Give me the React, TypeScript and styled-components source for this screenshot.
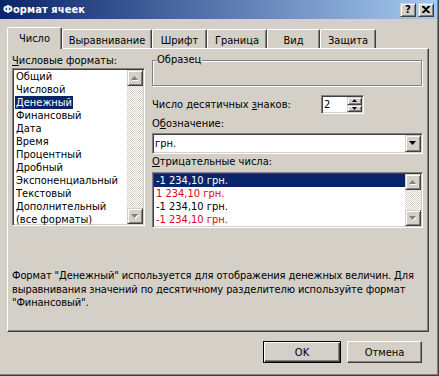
import React from "react";
import styled, { createGlobalStyle } from "styled-components";

const FACE = "#d4d0c8";
const SHADOW = "#808080";
const DARK = "#404040";
const NAVY = "#0a246a";
const RED = "#e0001a";

const GlobalStyle = createGlobalStyle`
  html, body {
    margin: 0;
    padding: 0;
    background: ${FACE};
  }
  body {
    font-family: "DejaVu Sans Condensed", "DejaVu Sans", sans-serif;
    font-size: 11px;
    color: #000;
  }
  * {
    box-sizing: border-box;
  }
`;

const Window = styled.div`
  width: 439px;
  height: 376px;
  background: ${FACE};
  border-right: 1px solid ${DARK};
  border-bottom: 1px solid ${DARK};
  box-shadow: inset -1px -1px ${SHADOW};
  display: flex;
  flex-direction: column;
  overflow: hidden;
`;

const TitleBar = styled.div`
  height: 19px;
  margin-right: 1px;
  padding: 0 3px 0 3px;
  background: linear-gradient(to right, ${NAVY}, #a6caf0);
  display: flex;
  align-items: center;
`;

const Title = styled.div`
  flex: 1;
  color: #fff;
  font-weight: bold;
  font-size: 11px;
  letter-spacing: 0.1px;
`;

const CaptionButton = styled.div`
  width: 16px;
  height: 14px;
  margin-left: 2px;
  background: ${FACE};
  border: 1px solid;
  border-color: ${FACE} ${DARK} ${DARK} ${FACE};
  box-shadow: inset 1px 1px #fff, inset -1px -1px ${SHADOW};
  display: flex;
  align-items: center;
  justify-content: center;
  font-family: "DejaVu Sans", sans-serif;
  font-weight: bold;
  font-size: 10px;
  line-height: 1;
`;

const Body = styled.div`
  flex: 1;
  padding: 0 9px 0 7px;
  display: flex;
  flex-direction: column;
`;

const TabStrip = styled.div`
  margin-top: 8px;
  height: 21px;
  display: flex;
  align-items: flex-end;
`;

const Tab = styled.div<{ $active?: boolean; $w: number }>`
  width: ${(p) => p.$w}px;
  height: ${(p) => (p.$active ? 22 : 19)}px;
  margin-bottom: ${(p) => (p.$active ? -1 : 0)}px;
  padding: ${(p) => (p.$active ? "0 0 1px" : "2px 0 0")};
  background: ${FACE};
  border-top: 1px solid #fff;
  border-left: 1px solid #fff;
  border-right: 1px solid ${DARK};
  border-top-left-radius: 2px;
  border-top-right-radius: 2px;
  box-shadow: inset -1px 0 ${SHADOW};
  display: flex;
  align-items: center;
  justify-content: center;
  position: relative;
  z-index: ${(p) => (p.$active ? 2 : 0)};
  white-space: nowrap;
`;

const Panel = styled.div`
  height: 284px;
  padding: 5px 4px 0 4px;
  border-top: 1px solid #fff;
  border-left: 1px solid #fff;
  border-right: 1px solid ${DARK};
  border-bottom: 1px solid ${DARK};
  box-shadow: inset -1px -1px ${SHADOW};
  display: flex;
  flex-direction: column;
`;

const Columns = styled.div`
  display: grid;
  grid-template-columns: 133px 271px;
  column-gap: 7px;
  align-items: start;
`;

const Column = styled.div`
  display: flex;
  flex-direction: column;
`;

const Label = styled.div<{ $mt?: number }>`
  height: 14px;
  line-height: 14px;
  margin-top: ${(p) => p.$mt ?? 0}px;
  white-space: nowrap;
`;

const Sunken = styled.div`
  background: #fff;
  border: 1px solid;
  border-color: ${SHADOW} #fff #fff ${SHADOW};
  box-shadow: inset 1px 1px ${DARK}, inset -1px -1px ${FACE};
  padding: 1px;
`;

const ListBox = styled(Sunken)<{ $h: number; $mt?: number }>`
  height: ${(p) => p.$h}px;
  margin-top: ${(p) => p.$mt ?? 0}px;
  display: flex;
`;

const Items = styled.div`
  flex: 1;
  display: flex;
  flex-direction: column;
  min-width: 0;
`;

const FormatItem = styled.div`
  height: 13px;
  line-height: 13px;
  padding-left: 1px;
  white-space: nowrap;
`;

const Highlight = styled.span<{ $on?: boolean }>`
  display: inline-block;
  padding: 0 1px;
  background: ${(p) => (p.$on ? NAVY : "transparent")};
  color: ${(p) => (p.$on ? "#fff" : "inherit")};
`;

const NegItem = styled.div<{ $selected?: boolean; $red?: boolean }>`
  height: 13px;
  line-height: 13px;
  padding-left: 2px;
  white-space: nowrap;
  background: ${(p) => (p.$selected ? NAVY : "transparent")};
  color: ${(p) => (p.$selected ? "#fff" : p.$red ? RED : "#000")};
`;

const ScrollBar = styled.div`
  width: 16px;
  flex: none;
  display: flex;
  flex-direction: column;
  justify-content: space-between;
  background-color: #e8e6e2;
  background-image: repeating-conic-gradient(${FACE} 0 25%, #fff 0 50%);
  background-size: 2px 2px;
`;

const RaisedButton = styled.div<{ $w: number; $h: number }>`
  width: ${(p) => p.$w}px;
  height: ${(p) => p.$h}px;
  flex: none;
  background: ${FACE};
  border: 1px solid;
  border-color: ${FACE} ${DARK} ${DARK} ${FACE};
  box-shadow: inset 1px 1px #fff, inset -1px -1px ${SHADOW};
  display: flex;
  align-items: center;
  justify-content: center;
`;

const GroupBox = styled.div`
  position: relative;
  margin-top: 6px;
  height: 26px;
  width: 270px;
  border: 1px solid ${SHADOW};
  box-shadow: inset 1px 1px #fff, 1px 1px #fff;
`;

const Legend = styled.span`
  position: absolute;
  top: -8px;
  left: 3px;
  padding: 0 1px;
  line-height: 14px;
  background: ${FACE};
`;

const SpinRow = styled.div`
  margin-top: 9px;
  height: 19px;
  display: flex;
  align-items: center;
`;

const SpinLabel = styled.div`
  width: 169px;
  white-space: nowrap;
`;

const SpinBox = styled(Sunken)`
  width: 43px;
  height: 19px;
  padding: 1px 1px 1px 2px;
  display: flex;
  align-items: center;
  justify-content: space-between;
`;

const SpinButtons = styled.div`
  display: flex;
  flex-direction: column;
  align-self: stretch;
`;

const Combo = styled(Sunken)`
  margin-top: 2px;
  height: 21px;
  display: flex;
  align-items: center;
  padding: 1px 1px 1px 2px;
`;

const ComboText = styled.div`
  flex: 1;
`;

const Description = styled.div`
  margin-top: 41px;
  line-height: 13.5px;
  white-space: nowrap;
  letter-spacing: -0.1px;
`;

const ButtonRow = styled.div`
  margin-top: 9px;
  padding-right: 7px;
  display: flex;
  justify-content: flex-end;
  gap: 6px;
`;

const DialogButton = styled.div<{ $default?: boolean }>`
  width: ${(p) => (p.$default ? 78 : 75)}px;
  height: 22px;
  background: ${FACE};
  border: 1px solid;
  border-color: ${(p) => (p.$default ? "#000" : `#fff ${DARK} ${DARK} #fff`)};
  box-shadow: ${(p) =>
    p.$default
      ? `inset 1px 1px #fff, inset -1px -1px ${DARK}, inset -2px -2px ${SHADOW}`
      : `inset -1px -1px ${SHADOW}`};
  display: flex;
  align-items: center;
  justify-content: center;
`;

type ArrowProps = { dir: "up" | "down"; disabled?: boolean; size?: number };

const Arrow = ({ dir, disabled, size = 7 }: ArrowProps) => {
  const half = Math.floor(size / 2);
  const h = half + 1;
  const pts =
    dir === "up"
      ? `0,${h} ${size},${h} ${size / 2},0`
      : `0,0 ${size},0 ${size / 2},${h}`;
  return (
    <svg width={size + 1} height={h + 1} viewBox={`0 0 ${size + 1} ${h + 1}`}>
      {disabled && <polygon points={pts} fill="#fff" transform="translate(1,1)" />}
      <polygon points={pts} fill={disabled ? SHADOW : "#000"} />
    </svg>
  );
};

const CloseGlyph = () => (
  <svg width="8" height="7" viewBox="0 0 8 7">
    <path d="M0 0h2l2 2 2-2h2v1L5 3.5 8 6v1H6L4 5 2 7H0V6l3-2.5L0 1z" fill="#000" />
  </svg>
);

const formats = [
  "Общий",
  "Числовой",
  "Денежный",
  "Финансовый",
  "Дата",
  "Время",
  "Процентный",
  "Дробный",
  "Экспоненциальный",
  "Текстовый",
  "Дополнительный",
  "(все форматы)",
];

const negatives = [
  { text: "-1 234,10 грн.", red: false },
  { text: "1 234,10 грн.", red: true },
  { text: "-1 234,10 грн.", red: false },
  { text: "-1 234,10 грн.", red: true },
];

const tabs: [string, number][] = [
  ["Число", 55],
  ["Выравнивание", 90],
  ["Шрифт", 55],
  ["Граница", 60],
  ["Вид", 53],
  ["Защита", 56],
];

const App = () => {
  return (
    <>
      <GlobalStyle />
      <Window>
        <TitleBar>
          <Title>Формат ячеек</Title>
          <CaptionButton>?</CaptionButton>
          <CaptionButton>
            <CloseGlyph />
          </CaptionButton>
        </TitleBar>

        <Body>
          <TabStrip>
            {tabs.map(([name, w], i) => (
              <Tab key={name} $w={w} $active={i === 0}>
                {name}
              </Tab>
            ))}
          </TabStrip>

          <Panel>
            <Columns>
              <Column>
                <Label>
                  <u>Ч</u>исловые форматы:
                </Label>
                <ListBox $h={158}>
                  <Items>
                    {formats.map((f) => (
                      <FormatItem key={f}>
                        <Highlight $on={f === "Денежный"}>{f}</Highlight>
                      </FormatItem>
                    ))}
                  </Items>
                  <ScrollBar>
                    <RaisedButton $w={16} $h={16}>
                      <Arrow dir="up" disabled />
                    </RaisedButton>
                    <RaisedButton $w={16} $h={16}>
                      <Arrow dir="down" disabled />
                    </RaisedButton>
                  </ScrollBar>
                </ListBox>
              </Column>

              <Column>
                <GroupBox>
                  <Legend>Образец</Legend>
                </GroupBox>

                <SpinRow>
                  <SpinLabel>
                    Число десятичных <u>з</u>наков:
                  </SpinLabel>
                  <SpinBox>
                    <span>2</span>
                    <SpinButtons>
                      <RaisedButton $w={15} $h={8}>
                        <Arrow dir="up" size={5} />
                      </RaisedButton>
                      <RaisedButton $w={15} $h={7}>
                        <Arrow dir="down" size={5} />
                      </RaisedButton>
                    </SpinButtons>
                  </SpinBox>
                </SpinRow>

                <Label $mt={3}>
                  О<u>б</u>означение:
                </Label>
                <Combo>
                  <ComboText>грн.</ComboText>
                  <RaisedButton $w={16} $h={17}>
                    <Arrow dir="down" />
                  </RaisedButton>
                </Combo>

                <Label $mt={1}>
                  <u>О</u>трицательные числа:
                </Label>
                <ListBox $h={56} $mt={3}>
                  <Items>
                    {negatives.map((n, i) => (
                      <NegItem key={i} $selected={i === 0} $red={n.red}>
                        {n.text}
                      </NegItem>
                    ))}
                  </Items>
                  <ScrollBar>
                    <RaisedButton $w={16} $h={16}>
                      <Arrow dir="up" disabled />
                    </RaisedButton>
                    <RaisedButton $w={16} $h={16}>
                      <Arrow dir="down" disabled />
                    </RaisedButton>
                  </ScrollBar>
                </ListBox>
              </Column>
            </Columns>

            <Description>
              Формат "Денежный" используется для отображения денежных величин. Для
              <br />
              выравнивания значений по десятичному разделителю используйте формат
              <br />
              "Финансовый".
            </Description>
          </Panel>

          <ButtonRow>
            <DialogButton $default>OK</DialogButton>
            <DialogButton>Отмена</DialogButton>
          </ButtonRow>
        </Body>
      </Window>
    </>
  );
};

export default App;
